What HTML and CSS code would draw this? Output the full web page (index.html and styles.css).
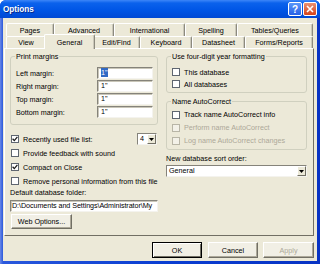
FILE: index.html
```html
<!DOCTYPE html>
<html lang="en">
<head>
    <meta charset="UTF-8">
    <title>Options</title>
    <link rel="stylesheet" href="styles.css">
</head>
<body>

    <div class="window">
        <div class="titlebar">
            <span class="title">Options</span>
            <span class="caption-btn help">?</span>
            <span class="caption-btn close">
                <svg width="8" height="8" viewBox="0 0 8 8"><path d="M1 1 L7 7 M7 1 L1 7" stroke="#fff" stroke-width="1.6"/></svg>
            </span>
        </div>

        <div class="frame">
            <div class="client">
                <div class="tabs">
                    <div class="tab-row back">
                        <span class="tab" style="width:48px">Pages</span>
                        <span class="tab" style="width:60px">Advanced</span>
                        <span class="tab" style="width:71px">International</span>
                        <span class="tab" style="width:52px">Spelling</span>
                        <span class="tab" style="width:76px">Tables/Queries</span>
                    </div>
                    <div class="tab-row front">
                        <span class="tab" style="width:40px">View</span>
                        <span class="tab selected" style="width:51px">General</span>
                        <span class="tab" style="width:47px">Edit/Find</span>
                        <span class="tab" style="width:52px">Keyboard</span>
                        <span class="tab" style="width:53px">Datasheet</span>
                        <span class="tab" style="width:68px">Forms/Reports</span>
                    </div>
                </div>

                <div class="panel">
                    <div class="col">
                        <fieldset class="group margins">
                            <legend>Print margins</legend>
                            <div class="margin-row"><span>Left margin:</span><span class="field small"><span class="sel">1"</span></span></div>
                            <div class="margin-row"><span>Right margin:</span><span class="field small">1"</span></div>
                            <div class="margin-row"><span>Top margin:</span><span class="field small">1"</span></div>
                            <div class="margin-row"><span>Bottom margin:</span><span class="field small">1"</span></div>
                        </fieldset>

                        <div class="checks">
                            <div class="check">
                                <span class="box"><svg width="6" height="6" viewBox="0 0 6 6"><path d="M0.6 2.8 L2.3 4.6 L5.4 0.9" fill="none" stroke="#1b1b1b" stroke-width="1.3"/></svg></span>
                                <span class="grow">Recently used file list:</span>
                                <span class="select mini"><span class="value">4</span><span class="arrow"><svg width="5" height="3" viewBox="0 0 5 3"><path d="M0 0 H5 L2.5 3 Z" fill="#000"/></svg></span></span>
                            </div>
                            <div class="check">
                                <span class="box"></span>
                                <span>Provide feedback with sound</span>
                            </div>
                            <div class="check">
                                <span class="box"><svg width="6" height="6" viewBox="0 0 6 6"><path d="M0.6 2.8 L2.3 4.6 L5.4 0.9" fill="none" stroke="#1b1b1b" stroke-width="1.3"/></svg></span>
                                <span>Compact on Close</span>
                            </div>
                            <div class="check">
                                <span class="box"></span>
                                <span>Remove personal information from this file</span>
                            </div>
                        </div>

                        <div class="label">Default database folder:</div>
                        <div class="field folder">D:\Documents and Settings\Administrator\My</div>
                        <div class="button web">Web Options...</div>
                    </div>

                    <div class="col">
                        <fieldset class="group year">
                            <legend>Use four-digit year formatting</legend>
                            <div class="check"><span class="box"></span><span>This database</span></div>
                            <div class="check"><span class="box"></span><span>All databases</span></div>
                        </fieldset>

                        <fieldset class="group autocorrect">
                            <legend>Name AutoCorrect</legend>
                            <div class="check"><span class="box"></span><span>Track name AutoCorrect info</span></div>
                            <div class="check disabled"><span class="box"></span><span>Perform name AutoCorrect</span></div>
                            <div class="check disabled"><span class="box"></span><span>Log name AutoCorrect changes</span></div>
                        </fieldset>

                        <div class="label sort-label">New database sort order:</div>
                        <div class="select sort"><span class="value">General</span><span class="arrow"><svg width="5" height="3" viewBox="0 0 5 3"><path d="M0 0 H5 L2.5 3 Z" fill="#000"/></svg></span></div>
                    </div>
                </div>

                <div class="footer">
                    <span class="button default">OK</span>
                    <span class="button">Cancel</span>
                    <span class="button disabled">Apply</span>
                </div>
            </div>
        </div>
    </div>

</body>
</html>
```

FILE: styles.css
```css
body {
    margin: 0;
    font-family: "Liberation Sans", Arial, sans-serif;
    font-size: 7.2px;
    color: #000;
}

.window {
    width: 320px;
    height: 264px;
    display: flex;
    flex-direction: column;
    border-radius: 6px 6px 0 0;
    overflow: hidden;
    background: #0a3ed2;
}

/* title bar */
.titlebar {
    height: 18px;
    flex: none;
    display: flex;
    align-items: center;
    padding: 0 3px;
    background: linear-gradient(#3d86f8 0, #0b62ec 3px, #0056e6 55%, #0049d4 100%);
}

.title {
    flex: 1;
    color: #fff;
    font-weight: bold;
    font-size: 8.2px;
    text-shadow: 1px 1px #0a2a8a;
}

.caption-btn {
    width: 14px;
    height: 14px;
    box-sizing: border-box;
    border: 1px solid #fff;
    border-radius: 2px;
    display: flex;
    align-items: center;
    justify-content: center;
    color: #fff;
    font-weight: bold;
    font-size: 10px;
}

.help {
    margin-right: 1px;
    background: linear-gradient(#5b97fa, #2560e6);
}

.close {
    background: linear-gradient(#eb9070, #d5431b);
}

/* window body */
.frame {
    flex: 1;
    display: flex;
    padding: 0 3px 3px;
    background: linear-gradient(to right, #6a88e6 0, #2a58dc 3px, #0a3ed2 50%, #0833c4 100%);
}

.client {
    flex: 1;
    display: flex;
    flex-direction: column;
    background: #ece9d8;
    padding: 5px 3px 0 1px;
}

/* tabs */
.tabs {
    padding-left: 2px;
}

.tab-row {
    display: flex;
}

.tab-row.back {
    height: 13px;
}

.tab-row.front {
    height: 12px;
}

.tab {
    box-sizing: border-box;
    display: flex;
    align-items: center;
    justify-content: center;
    border-top: 1px solid #fff;
    border-left: 1px solid #fff;
    border-right: 1px solid #8c8a7e;
    border-radius: 2px 2px 0 0;
    box-shadow: inset -1px 0 #cbc8ba;
    background: #ece9d8;
    white-space: nowrap;
}

.tab.selected {
    position: relative;
    z-index: 1;
    height: 15px;
    margin: -2px -2px -1px;
    width: 51px;
}

.panel {
    height: 188px;
    box-sizing: border-box;
    border: 1px solid;
    border-color: #fff #716f64 #716f64 #fff;
    padding: 3px 6px 0 5px;
    display: grid;
    grid-template-columns: 148px 141px;
    column-gap: 8px;
    align-items: start;
}

/* group boxes */
.group {
    margin: 0;
    min-width: 0;
    border: 1px solid #d0d0bf;
    border-radius: 3px;
}

.group legend {
    padding: 0 1px;
    margin-left: -1px;
    line-height: 9px;
}

.margins {
    padding: 6px 4px 6px 5px;
}

.margin-row {
    display: flex;
    align-items: center;
    justify-content: space-between;
    height: 12px;
    margin-bottom: 1px;
}

.margin-row:last-child {
    margin-bottom: 0;
}

.year {
    padding: 5px 4px 2px 5px;
}

.year .check {
    height: 12px;
}

.autocorrect {
    margin-top: 4px;
    padding: 2px 4px 2px 5px;
}

.autocorrect .check {
    height: 13px;
}

/* inputs */
.field {
    display: block;
    box-sizing: border-box;
    height: 12px;
    line-height: 10px;
    background: #fff;
    border: 1px solid;
    border-color: #85837a #f4f3ee #f4f3ee #85837a;
    box-shadow: inset 1px 1px #c9c6b8;
    white-space: nowrap;
    overflow: hidden;
}

.field.small {
    width: 56px;
    padding-left: 3px;
}

.sel {
    background: #316ac5;
    color: #fff;
}

.folder {
    margin-top: 3px;
    padding-left: 1px;
    letter-spacing: -0.08px;
}

.select {
    display: flex;
    box-sizing: border-box;
    height: 12px;
    background: #fff;
    border: 1px solid;
    border-color: #85837a #f4f3ee #f4f3ee #85837a;
}

.select .value {
    flex: 1;
    padding-left: 2px;
    line-height: 10px;
}

.select .arrow {
    width: 9px;
    box-sizing: border-box;
    display: flex;
    align-items: center;
    justify-content: center;
    background: #ece9d8;
    border: 1px solid;
    border-color: #fff #716f64 #716f64 #fff;
}

.select.mini {
    width: 20px;
    margin-right: 1px;
}

.select.sort {
    margin-top: 2px;
}

/* check boxes */
.checks {
    margin-top: 7px;
}

.check {
    display: flex;
    align-items: center;
    gap: 4px;
    height: 14px;
    white-space: nowrap;
}

.checks .box {
    margin-left: 1px;
}

.box {
    width: 8px;
    height: 8px;
    flex: none;
    box-sizing: border-box;
    border: 1px solid #5f6670;
    background: #fff;
    display: flex;
    align-items: center;
    justify-content: center;
}

.grow {
    flex: 1;
}

.check.disabled {
    color: #aca899;
}

.check.disabled .box {
    border-color: #b8b5a6;
    background: #f3f1e8;
}

.label {
    line-height: 9px;
}

.sort-label {
    margin-top: 4px;
}

/* buttons */
.button {
    box-sizing: border-box;
    display: flex;
    align-items: center;
    justify-content: center;
    height: 16px;
    width: 50px;
    background: #f1efe5;
    border: 1px solid;
    border-color: #fff #716f64 #716f64 #fff;
    box-shadow: inset -1px -1px #aca899;
}

.button.web {
    width: 61px;
    height: 15px;
    margin: 2px 0 0 1px;
}

.button.default {
    border-color: #000;
    box-shadow: inset 1px 1px #fff, inset -1px -1px #716f64;
}

.button.disabled {
    width: 51px;
    color: #aca899;
}

.footer {
    display: flex;
    justify-content: flex-end;
    gap: 6px;
    margin-top: 6px;
}

.footer .button:last-child {
    margin-left: -1px;
}
```
